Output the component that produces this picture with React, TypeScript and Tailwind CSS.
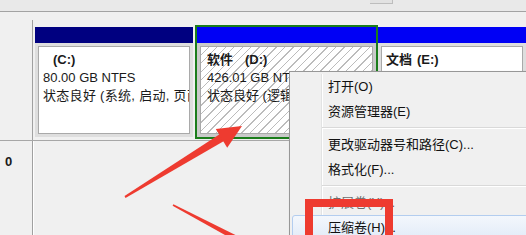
import React from 'react';

const Partition: React.FC<{
  className: string;
  header: string;
  body: string;
  box: string;
  children: React.ReactNode;
}> = ({ className, header, body, box, children }) => (
  <div className={`flex flex-col h-[114px] ${className}`}>
    <div className={`h-[16px] shrink-0 ${header}`} />
    <div className={`flex-1 flex p-[3px] ${body}`}>
      <div className={`flex-1 border border-[#a9a9a9] overflow-hidden whitespace-nowrap pt-[4px] leading-[18px] ${box}`}>
        {children}
      </div>
    </div>
  </div>
);

const MenuItem: React.FC<{ label: string; disabled?: boolean; active?: boolean }> = ({ label, disabled, active }) => (
  <div
    className={
      active
        ? 'h-[25px] flex items-center pl-[35px] rounded-[3px] border border-[#b3cdef] bg-[linear-gradient(#f3f7fc,#e2ebf8)] text-[#111]'
        : disabled
          ? 'h-[25px] flex items-center pl-[36px] text-[#6d6d6d]'
          : 'h-[25px] flex items-center pl-[36px] text-[#111]'
    }
  >
    {label}
  </div>
);

const Separator = () => (
  <div className="h-[8px] flex flex-col justify-center pl-[30px]">
    <div className="h-px bg-[#d9d9d9]" />
    <div className="h-px bg-white" />
  </div>
);

export default function App() {
  return (
    <div className="relative w-[526px] h-[235px] overflow-hidden bg-[#f0f0f0] text-[13px] text-[#1a1a1a] font-['Liberation_Sans','Noto_Sans_CJK_SC',sans-serif]">
      {/* top strip */}
      <div className="h-[12px] bg-[#e9e9e9] border-b border-[#a3a3a3] flex">
        <div className="ml-[370px] w-[23px] h-[4px] border-b border-r border-[#bdbdbd] bg-[#e2e2e2]" />
      </div>

      {/* disk row */}
      <div className="flex h-[129px] border-b border-[#a7a7a7]">
        <div className="w-[32px] shrink-0" />
        <div className="w-px mt-[8px] bg-[#a0a0a0] shrink-0" />
        <div className="flex-1 flex items-start pt-[13px] min-w-0">
          <Partition
            className="w-[162px] shrink-0 border-2 border-transparent"
            header="bg-[#000080]"
            body="bg-[#dedede]"
            box="bg-white pl-[4px]"
          >
            <div className="font-bold pl-[10px]">(C:)</div>
            <div>80.00 GB NTFS</div>
            <div className="tracking-[0.3px]">状态良好 (系统, 启动, 页面文件, 活动, 故障转储, 主分区)</div>
          </Partition>
          <Partition
            className="w-[183px] shrink-0 border-2 border-[#1b7d1b]"
            header="bg-[#0000f5]"
            body="bg-[#cacaca]"
            box="bg-[repeating-linear-gradient(135deg,#ffffff_0px,#ffffff_5px,#bcbcbc_5px,#bcbcbc_6px)] pl-[6px]"
          >
            <div className="font-bold">
              软件<span className="ml-[12px]">(D:)</span>
            </div>
            <div>426.01 GB NTFS</div>
            <div>状态良好 (逻辑驱动器)</div>
          </Partition>
          <Partition
            className="flex-1 min-w-0 border-y-2 border-transparent"
            header="bg-[#0000f5]"
            body="bg-[#dedede]"
            box="bg-white pl-[4px]"
          >
            <div className="font-bold">
              文档<span className="ml-[5px]">(E:)</span>
            </div>
            <div>424.01 GB NTFS</div>
            <div>状态良好 (逻辑驱动器)</div>
          </Partition>
        </div>
      </div>

      {/* second disk row */}
      <div className="flex h-[100px]">
        <div className="w-[32px] shrink-0 pt-[12px] pl-[5px] font-bold leading-[18px]">0</div>
        <div className="w-px bg-[#a0a0a0] shrink-0" />
        <div className="w-px bg-white shrink-0" />
        <div className="flex-1" />
      </div>

      {/* context menu */}
      <div className="absolute left-[289px] top-[71px] w-[260px] h-[200px] border border-[#979797] bg-[#f0f0f0] p-[2px] shadow-[2px_2px_3px_rgba(0,0,0,0.25)]">
        <div className="relative h-full">
          <div className="absolute left-[29px] top-0 bottom-0 w-px bg-[#e2e3e3]" />
          <div className="absolute left-[30px] top-0 bottom-0 w-px bg-white" />
          <div className="relative">
            <MenuItem label="打开(O)" />
            <MenuItem label="资源管理器(E)" />
            <Separator />
            <MenuItem label="更改驱动器号和路径(C)..." />
            <MenuItem label="格式化(F)..." />
            <Separator />
            <MenuItem label="扩展卷(X)..." disabled />
            <MenuItem label="压缩卷(H)..." active />
          </div>
        </div>
      </div>

      {/* annotations */}
      <svg className="absolute inset-0 pointer-events-none" width="526" height="235" viewBox="0 0 526 235">
        <polygon points="125.5,197.9 124.5,196.1 220,134 224,141" fill="#ee3b30" />
        <polygon points="242,126 215.8,129 227.2,147.8" fill="#ee3b30" />
        <polygon points="173.4,204.3 251.4,242.9 248.6,248.2 172.6,205.7" fill="#ee3b30" />
      </svg>
      <div className="absolute left-[305px] top-[199px] w-[88px] h-[60px] border-[8px] border-[#ee3b30]" />
    </div>
  );
}
